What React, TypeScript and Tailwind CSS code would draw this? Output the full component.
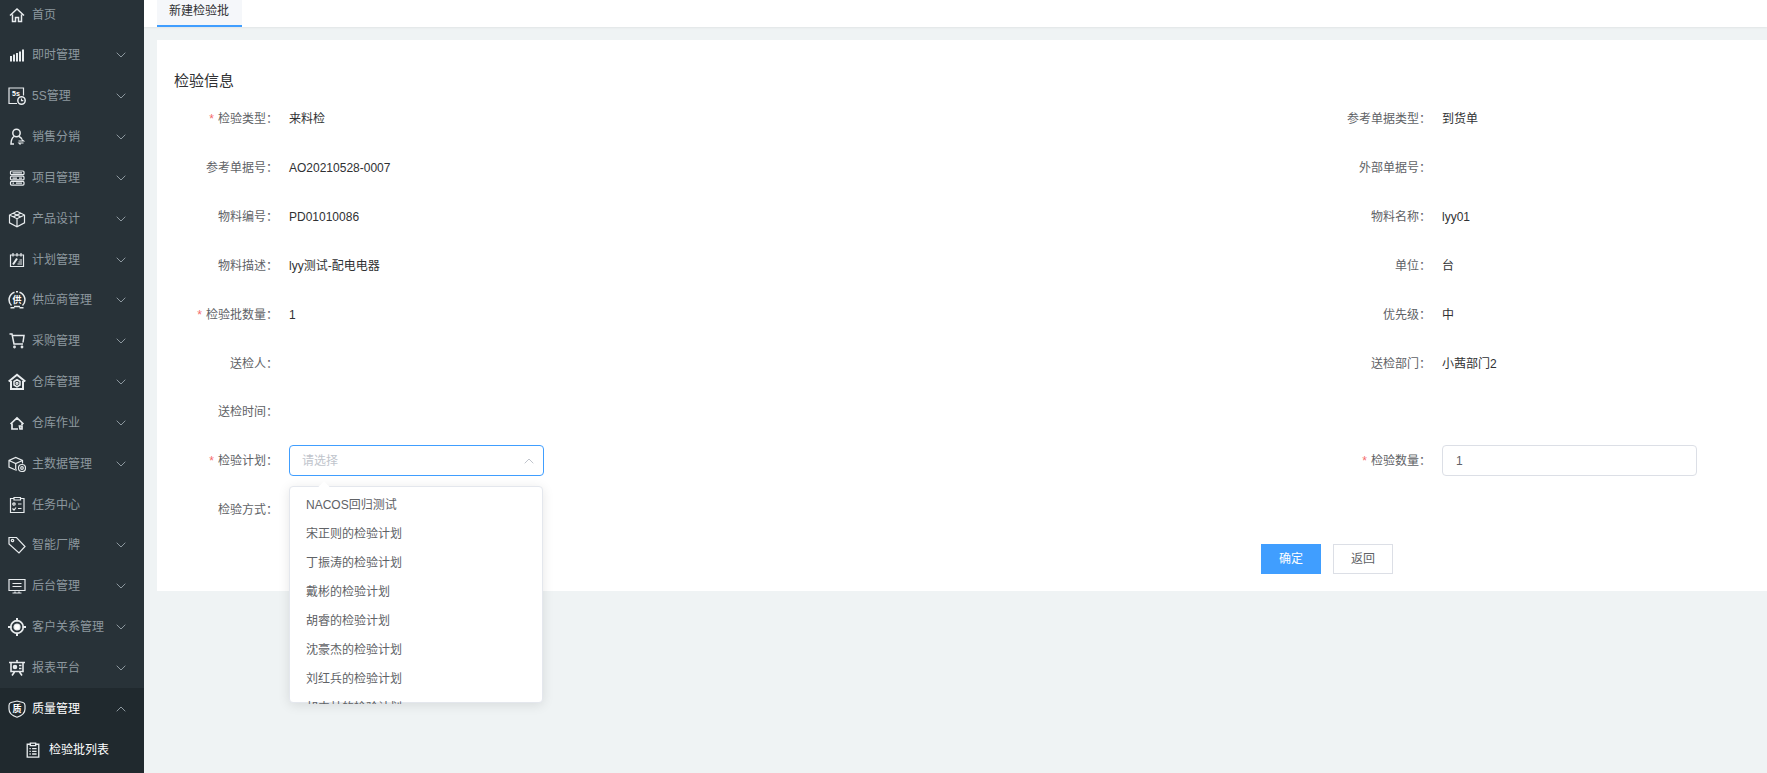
import { useState } from "react";

type MenuItem = { name: string; icon: string; leaf?: boolean };

const menus: MenuItem[] = [
  { name: "即时管理", icon: "bars" },
  { name: "5S管理", icon: "fives" },
  { name: "销售分销", icon: "user" },
  { name: "项目管理", icon: "server" },
  { name: "产品设计", icon: "box" },
  { name: "计划管理", icon: "plan" },
  { name: "供应商管理", icon: "supplier" },
  { name: "采购管理", icon: "cart" },
  { name: "仓库管理", icon: "store" },
  { name: "仓库作业", icon: "storeWork" },
  { name: "主数据管理", icon: "data" },
  { name: "任务中心", icon: "task", leaf: true },
  { name: "智能厂牌", icon: "tag" },
  { name: "后台管理", icon: "monitor" },
  { name: "客户关系管理", icon: "target" },
  { name: "报表平台", icon: "report" },
];

const plans = [
  "NACOS回归测试",
  "宋正则的检验计划",
  "丁振涛的检验计划",
  "戴彬的检验计划",
  "胡睿的检验计划",
  "沈豪杰的检验计划",
  "刘红兵的检验计划",
  "胡中林的检验计划",
];

const glyph = "fill-white stroke-none font-bold";

const icons: Record<string, any> = {
  home: <path d="M2 9.5 9 3 16 9.500M4.500 8.500V15.500H7.500V11.500H10.500V15.500H13.500V8.500" strokeWidth="1.500" />,
  bars: <path d="M3 15.500V10M6 15.500V8.500M9 15.500V7M12 15.500V5.500M15 15.500V3.500" strokeWidth="2" />,
  fives: (
    <>
      <path d="M9 16.500H1V1H15.500V8.500" />
      <text x="4" y="9" fontSize="7" className={glyph}>5s</text>
      <circle cx="13.500" cy="13.500" r="3.700" strokeWidth="1.500" />
      <path d="M13.500 11.500V13.700H15.300" />
    </>
  ),
  user: (
    <>
      <circle cx="8.500" cy="5" r="3.700" strokeWidth="1.500" />
      <path d="M6 8.500C3.800 10 3 12.500 3 16H6M11 8.500C12.800 9.300 13.500 10 14 11.500" strokeWidth="1.500" />
      <path d="M10.500 13H15.500L14 11.800M15.500 15H11L12.500 16.500" />
    </>
  ),
  server: (
    <>
      <rect x="2.500" y="2" width="13.500" height="3.700" rx="1" />
      <rect x="2.500" y="7.200" width="13.500" height="3.700" rx="1" />
      <rect x="2.500" y="12.400" width="13.500" height="3.700" rx="1" />
      <path d="M4.500 3.900H14M4.500 9.100H9M11 9.100H14M4.500 14.200H6M8 14.200H14" />
    </>
  ),
  box: (
    <path d="M9 1.300 16.500 5V12.800L9 16.700 1.500 12.800V5ZM1.500 5 9 8.700 16.500 5M9 8.700V16.700M5.200 3.200 12.700 6.900M12.700 3.200 5.200 6.900" />
  ),
  plan: (
    <>
      <path d="M2.500 4H15.500V15.500H2.500Z" />
      <path d="M5 2V5.500M9 2V5.500M13 2V5.500M11.500 9H14M10.500 11H14M9.500 13H14" />
      <path d="M5 13.500 9 7.500" strokeWidth="2" />
    </>
  ),
  supplier: (
    <>
      <path d="M6.500 1.200A8 8 0 0 0 3.500 14.500M11.500 1.200A8 8 0 0 1 14.500 14.500M8 .8H10M2.500 16.700H6.500M11.500 16.700H15.500M6 15.500H12" strokeWidth="1.500" />
      <text x="9" y="12" fontSize="9" textAnchor="middle" className={glyph}>供</text>
    </>
  ),
  cart: (
    <>
      <path d="M1.500 2H4L6 12H15M4.500 3.500H16L15 10.500" strokeWidth="1.500" />
      <circle cx="6.500" cy="15" r=".8" />
      <circle cx="14" cy="15" r=".8" />
    </>
  ),
  store: (
    <>
      <path d="M.7 8.500 9 1.700 17.300 8.500M3 8V16H15V8" strokeWidth="2" />
      <path d="M9 6.700 12 8.500V12L9 13.800 6 12V8.500Z" strokeWidth="1.500" />
      <circle cx="9" cy="10.300" r="1" />
    </>
  ),
  storeWork: (
    <path d="M2.500 10 9 4 15.500 10M4 9.500V15H10M14 9.500V11M11.500 12H14V15H12Z" strokeWidth="1.700" />
  ),
  data: (
    <>
      <path d="M9 14.800 7.500 15 1 12V5.500L7.700 2.500 14.500 5.500V8.500M1 5.500 7.700 8.500 14.500 5.500M7.700 8.500V14" />
      <circle cx="14" cy="13" r="3.500" />
      <circle cx="14" cy="13" r="1.300" />
    </>
  ),
  task: (
    <>
      <path d="M5.500 2.500H2.500V16.500H16V2.500H13M6 1.500H12.500V4H6ZM10 8H13.500M10 12.500H13.500M4.500 12.500 6 14 8 11.500" />
      <circle cx="6" cy="8" r="1.200" />
    </>
  ),
  tag: (
    <>
      <path d="M1 1.500H8.500L17 10.500 11 17 1 8Z" />
      <circle cx="4.500" cy="4.500" r="1.200" />
    </>
  ),
  monitor: (
    <>
      <path d="M1 2.500H17V13.500H1ZM4.500 16H13.500" />
      <path d="M4.500 6.500H13.500M4.500 9.500H13.500M7 14.500V16M11 14.500V16" />
    </>
  ),
  target: (
    <>
      <circle cx="9" cy="9" r="6.300" strokeWidth="1.700" />
      <circle cx="9" cy="9" r="3" className="fill-white" />
      <path d="M9 0V3.500M9 14.500V18M0 9H3.500M14.500 9H18" strokeWidth="2" />
    </>
  ),
  report: (
    <>
      <path d="M1 3.500H17M3 3.500V12.500H15V3.500M9 1V3.500M6.500 13 4 16.500M11.500 13 14 16.500M11 6.500H13.500M11 9.500H13.500" strokeWidth="1.600" />
      <circle cx="7" cy="8" r="1.700" className="fill-[#e8ecee]" />
    </>
  ),
  quality: (
    <>
      <path d="M9 1 15 2.500C16.500 3 17 4 17 5.500V9C17 13 13 16 9 17.200 5 16 1 13 1 9V5.500C1 4 1.500 3 3 2.500Z" />
      <text x="9" y="12" fontSize="9" textAnchor="middle" className={glyph}>质</text>
    </>
  ),
  list: (
    <path d="M6 2.500H2.500V17H15.500V2.500H12M6 1.200H12V4H6ZM5 7.500H6.500M8 7.500H13M5 10.500H6.500M8 10.500H13M5 13.500H6.500M8 13.500H13" strokeWidth="1.500" />
  ),
};

const Icon = ({ name, className }: { name: string; className: string }) => (
  <svg viewBox="0 0 18 18" className={`shrink-0 fill-none stroke-[#e8ecee] ${className}`} strokeWidth="1.200" aria-hidden="true">
    {icons[name]}
  </svg>
);

const Chevron = ({ up, className }: { up?: boolean; className: string }) => (
  <svg viewBox="0 0 10 6" className={`w-[10px] h-[6px] shrink-0 fill-none ${className}`} aria-hidden="true">
    <path d={up ? "M.7 5.300 5 1 9.300 5.300" : "M.7 .7 5 5 9.300 .7"} />
  </svg>
);

const Sidebar = () => (
  <nav className="w-36 h-screen shrink-0 flex flex-col pb-[3px] bg-[#283238] text-[#8d989f]">
    <a href="#home" className="h-[35px] pb-[5px] pl-2 flex items-center gap-[6px]">
      <Icon name="home" className="w-[18px] h-[18px]" />
      首页
    </a>
    {menus.map((menu) => (
      <button key={menu.name} className="flex-1 pl-2 pr-[18px] flex items-center gap-[6px]">
        <Icon name={menu.icon} className="w-[18px] h-[18px]" />
        <span className="flex-1 text-left whitespace-nowrap">{menu.name}</span>
        {!menu.leaf && <Chevron className="stroke-[#8d989f]" />}
      </button>
    ))}
    <div className="flex-[2] -mb-[3px] pb-[3px] flex flex-col bg-[#20292e] text-white">
      <button className="flex-1 pl-2 pr-[18px] flex items-center gap-[6px]">
        <Icon name="quality" className="w-[18px] h-[18px]" />
        <span className="flex-1 text-left">质量管理</span>
        <Chevron up className="stroke-[#8d989f]" />
      </button>
      <a href="#batch" className="flex-1 pl-[25px] flex items-center gap-2">
        <Icon name="list" className="w-4 h-4" />
        检验批列表
      </a>
    </div>
  </nav>
);

const Label = ({ text, required, htmlFor }: { text: string; required?: boolean; htmlFor?: string }) => {
  const Tag = htmlFor ? "label" : "span";
  return (
    <Tag htmlFor={htmlFor} className="w-[132px] shrink-0 pr-[11px] text-right text-[#606266]">
      {required && <span className="mr-1 text-[#f56c6c]">*</span>}
      {text}：
    </Tag>
  );
};

const Field = ({ label, value, required }: { label: string; value?: string; required?: boolean }) => (
  <div className="min-h-12 h-full flex items-center">
    <Label text={label} required={required} />
    <span className="text-[#303133]">{value}</span>
  </div>
);

const PlanSelect = () => {
  const [plan, setPlan] = useState<string>("");
  const [open, setOpen] = useState<boolean>(true);

  return (
    <div className="relative w-[255px]">
      <button
        id="plan"
        aria-haspopup="listbox"
        aria-expanded={open}
        onClick={() => setOpen(!open)}
        className="w-full h-[31px] pl-3 pr-[9px] flex items-center justify-between rounded border border-[#409eff] bg-white"
      >
        <span className={plan ? "text-[#606266]" : "text-[#c0c4cc]"}>{plan || "请选择"}</span>
        <Chevron up={open} className="stroke-[#c0c4cc]" />
      </button>
      {open && (
        <div className="absolute top-[41px] left-0 w-[254px] rounded border border-[#e4e7ed] bg-white shadow-[0_2px_12px_rgba(0,0,0,0.1)]">
          <span className="absolute -top-1 left-[30px] w-2 h-2 rotate-45 bg-white" />
          <ul role="listbox" className="relative h-[217px] -mb-[2px] pt-[3px] overflow-hidden">
            {plans.map((p) => (
              <li
                key={p}
                role="option"
                aria-selected={p === plan}
                className="h-[29px] px-4 flex items-center text-[#606266] cursor-pointer hover:bg-[#f5f7fa]"
                onClick={() => {
                  setPlan(p);
                  setOpen(false);
                }}
              >
                {p}
              </li>
            ))}
          </ul>
        </div>
      )}
    </div>
  );
};

export default function App() {
  const [count, setCount] = useState<string>("1");

  return (
    <div className="flex h-screen overflow-hidden bg-[#eff3f4] font-['Liberation_Sans','Noto_Sans_CJK_SC',sans-serif] text-xs">
      <Sidebar />
      <main className="flex-1 min-w-0">
        <header className="h-[27px] pl-[13px] flex bg-white shadow-[0_1px_2px_rgba(0,0,0,0.06)]">
          <a href="#new" className="pl-3 pr-[13px] pb-1 flex items-center border-b-2 border-[#409eff] bg-[#f5f7fa] text-[#303133]">
            新建检验批
          </a>
        </header>
        <section className="mt-[13px] ml-[13px] pt-[30px] pb-[17px] bg-white">
          <h2 className="pl-[17px] h-6 leading-[22px] text-[15px] text-[#303133]">检验信息</h2>
          <div className="grid grid-cols-[1fr_457px] grid-rows-[repeat(6,49px)_48px_repeat(2,49px)]">
            <Field label="检验类型" value="来料检" required />
            <Field label="参考单据类型" value="到货单" />
            <Field label="参考单据号" value="AO20210528-0007" />
            <Field label="外部单据号" />
            <Field label="物料编号" value="PD01010086" />
            <Field label="物料名称" value="lyy01" />
            <Field label="物料描述" value="lyy测试-配电电器" />
            <Field label="单位" value="台" />
            <Field label="检验批数量" value="1" required />
            <Field label="优先级" value="中" />
            <Field label="送检人" />
            <Field label="送检部门" value="小茜部门2" />
            <div className="col-span-2">
              <Field label="送检时间" />
            </div>
            <div className="flex items-center">
              <Label text="检验计划" htmlFor="plan" required />
              <PlanSelect />
            </div>
            <div className="flex items-center">
              <Label text="检验数量" htmlFor="count" required />
              <input
                id="count"
                value={count}
                onChange={(e) => setCount(e.target.value)}
                className="w-[255px] h-[31px] px-[13px] rounded border border-[#dcdfe6] text-[#606266] outline-none"
              />
            </div>
            <Field label="检验方式" />
          </div>
          <div className="mt-[10px] pr-[374px] flex justify-end gap-3">
            <button className="w-[60px] h-[30px] bg-[#409eff] text-white">确定</button>
            <button className="w-[60px] h-[30px] border border-[#dcdfe6] bg-white text-[#606266]">返回</button>
          </div>
        </section>
      </main>
    </div>
  );
}
